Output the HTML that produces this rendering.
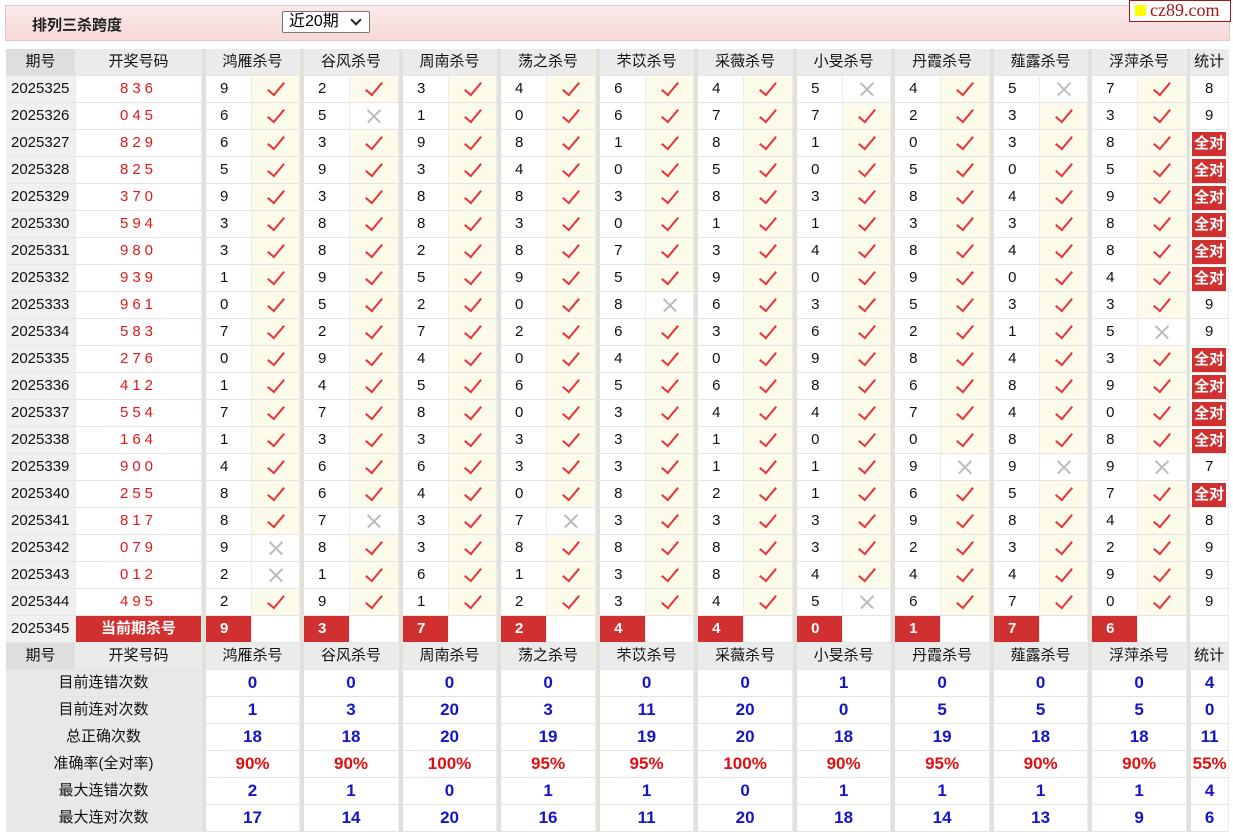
<!DOCTYPE html>
<html><head><meta charset="utf-8"><style>
body{margin:0;background:#fff;width:1233px;height:835px;overflow:hidden;font-family:"Liberation Sans","Noto Sans CJK SC",sans-serif;}
.top{position:absolute;left:5px;top:5px;width:1223px;height:34px;border:1px solid #e2c8c8;background:linear-gradient(#fbe9e9,#f6d9d9);}
.title{position:absolute;left:26px;top:8px;font-size:15px;font-weight:bold;color:#222;}
.sel{position:absolute;left:276px;top:5px;width:88px;height:22px;border:1px solid #777;background:#fff;font-size:16px;line-height:20px;padding-left:6px;box-sizing:border-box;border-radius:2px}
.sel span{position:absolute;right:9px;top:4px;width:6px;height:6px;border-right:2px solid #222;border-bottom:2px solid #222;transform:rotate(45deg)}
.logo{position:absolute;left:1129px;top:0;width:100px;height:20px;border:1px solid #a01818;background:#fff;font-family:"Liberation Serif",serif;font-size:18px;color:#a01818;line-height:19px;}
.logo i{display:inline-block;width:11px;height:11px;background:#ff0;margin:0 4px 0 5px;vertical-align:0}
table{position:absolute;left:6px;top:49px;border-collapse:separate;border-spacing:0;table-layout:fixed;width:1223px;}
tr{height:27px}
td{height:26px;line-height:26px;padding:0;border-bottom:1px solid #e4e4e4;border-right:1px solid #ececec;text-align:center;font-size:15px;color:#111;white-space:nowrap;overflow:hidden;position:relative}
.h td{background:#ebebeb;}
.h td.q{background:#dedede}
td.q{background:#f0f0f0;text-align:left;padding-left:5px}
.h td.q{text-align:center;padding:0}
td.k{color:#e01818;letter-spacing:4px;}
td.n{border-left:4px solid #e3e0d8;text-align:left;padding-left:14px}
.h td.n{text-align:center;padding:0}
td.y{background:#fdfbe9}
td.y::after{content:"";position:absolute;left:50%;top:50%;width:7px;height:15px;border-right:2px solid #e8323c;border-bottom:2px solid #e8323c;transform:translate(-50%,-62%) rotate(40deg)}
td.x{background:#fff}
td.x::before,td.x::after{content:"";position:absolute;left:50%;top:50%;width:18px;height:1.5px;background:#bbb;transform:translate(-50%,-50%) rotate(45deg)}
td.x::after{transform:translate(-50%,-50%) rotate(-45deg)}
td.s{border-left:3px solid #e3e0d8}
td.a{border-left:3px solid #e3e0d8;background:#fff;padding:0 2px}
td.a b{display:block;background:#d0302f;color:#fff;font-size:15px;line-height:24px;height:24px;margin-top:1px}
tr.cur td.k{background:#d0302f;color:#fff;font-weight:bold;letter-spacing:0}
tr.cur td.n{background:#d0302f;color:#fff;font-weight:bold}
td.L{background:#e8e8e8}
td.v{border-left:4px solid #e3e0d8;color:#1515c8;font-weight:bold;font-size:17px}
td.v.r{color:#e01010}
</style></head><body>
<div class="top"><div class="title">排列三杀跨度</div><div class="sel">近20期<span></span></div></div>
<div class="logo"><i></i>cz89.com</div>
<table>
<colgroup><col style="width:70px"><col style="width:126px"><col style="width:50px"><col style="width:48px"><col style="width:50px"><col style="width:49px"><col style="width:50px"><col style="width:48px"><col style="width:50px"><col style="width:49px"><col style="width:50px"><col style="width:48px"><col style="width:50px"><col style="width:49px"><col style="width:50px"><col style="width:48px"><col style="width:50px"><col style="width:49px"><col style="width:50px"><col style="width:48px"><col style="width:50px"><col style="width:49px"><col style="width:42px"></colgroup>
<tr class="h"><td class="q">期号</td><td>开奖号码</td><td class="n" colspan="2">鸿雁杀号</td><td class="n" colspan="2">谷风杀号</td><td class="n" colspan="2">周南杀号</td><td class="n" colspan="2">荡之杀号</td><td class="n" colspan="2">芣苡杀号</td><td class="n" colspan="2">采薇杀号</td><td class="n" colspan="2">小旻杀号</td><td class="n" colspan="2">丹霞杀号</td><td class="n" colspan="2">薤露杀号</td><td class="n" colspan="2">浮萍杀号</td><td class="s">统计</td></tr>
<tr><td class="q">2025325</td><td class="k">836</td><td class="n">9</td><td class="y"></td><td class="n">2</td><td class="y"></td><td class="n">3</td><td class="y"></td><td class="n">4</td><td class="y"></td><td class="n">6</td><td class="y"></td><td class="n">4</td><td class="y"></td><td class="n">5</td><td class="x"></td><td class="n">4</td><td class="y"></td><td class="n">5</td><td class="x"></td><td class="n">7</td><td class="y"></td><td class="s">8</td></tr>
<tr><td class="q">2025326</td><td class="k">045</td><td class="n">6</td><td class="y"></td><td class="n">5</td><td class="x"></td><td class="n">1</td><td class="y"></td><td class="n">0</td><td class="y"></td><td class="n">6</td><td class="y"></td><td class="n">7</td><td class="y"></td><td class="n">7</td><td class="y"></td><td class="n">2</td><td class="y"></td><td class="n">3</td><td class="y"></td><td class="n">3</td><td class="y"></td><td class="s">9</td></tr>
<tr><td class="q">2025327</td><td class="k">829</td><td class="n">6</td><td class="y"></td><td class="n">3</td><td class="y"></td><td class="n">9</td><td class="y"></td><td class="n">8</td><td class="y"></td><td class="n">1</td><td class="y"></td><td class="n">8</td><td class="y"></td><td class="n">1</td><td class="y"></td><td class="n">0</td><td class="y"></td><td class="n">3</td><td class="y"></td><td class="n">8</td><td class="y"></td><td class="a"><b>全对</b></td></tr>
<tr><td class="q">2025328</td><td class="k">825</td><td class="n">5</td><td class="y"></td><td class="n">9</td><td class="y"></td><td class="n">3</td><td class="y"></td><td class="n">4</td><td class="y"></td><td class="n">0</td><td class="y"></td><td class="n">5</td><td class="y"></td><td class="n">0</td><td class="y"></td><td class="n">5</td><td class="y"></td><td class="n">0</td><td class="y"></td><td class="n">5</td><td class="y"></td><td class="a"><b>全对</b></td></tr>
<tr><td class="q">2025329</td><td class="k">370</td><td class="n">9</td><td class="y"></td><td class="n">3</td><td class="y"></td><td class="n">8</td><td class="y"></td><td class="n">8</td><td class="y"></td><td class="n">3</td><td class="y"></td><td class="n">8</td><td class="y"></td><td class="n">3</td><td class="y"></td><td class="n">8</td><td class="y"></td><td class="n">4</td><td class="y"></td><td class="n">9</td><td class="y"></td><td class="a"><b>全对</b></td></tr>
<tr><td class="q">2025330</td><td class="k">594</td><td class="n">3</td><td class="y"></td><td class="n">8</td><td class="y"></td><td class="n">8</td><td class="y"></td><td class="n">3</td><td class="y"></td><td class="n">0</td><td class="y"></td><td class="n">1</td><td class="y"></td><td class="n">1</td><td class="y"></td><td class="n">3</td><td class="y"></td><td class="n">3</td><td class="y"></td><td class="n">8</td><td class="y"></td><td class="a"><b>全对</b></td></tr>
<tr><td class="q">2025331</td><td class="k">980</td><td class="n">3</td><td class="y"></td><td class="n">8</td><td class="y"></td><td class="n">2</td><td class="y"></td><td class="n">8</td><td class="y"></td><td class="n">7</td><td class="y"></td><td class="n">3</td><td class="y"></td><td class="n">4</td><td class="y"></td><td class="n">8</td><td class="y"></td><td class="n">4</td><td class="y"></td><td class="n">8</td><td class="y"></td><td class="a"><b>全对</b></td></tr>
<tr><td class="q">2025332</td><td class="k">939</td><td class="n">1</td><td class="y"></td><td class="n">9</td><td class="y"></td><td class="n">5</td><td class="y"></td><td class="n">9</td><td class="y"></td><td class="n">5</td><td class="y"></td><td class="n">9</td><td class="y"></td><td class="n">0</td><td class="y"></td><td class="n">9</td><td class="y"></td><td class="n">0</td><td class="y"></td><td class="n">4</td><td class="y"></td><td class="a"><b>全对</b></td></tr>
<tr><td class="q">2025333</td><td class="k">961</td><td class="n">0</td><td class="y"></td><td class="n">5</td><td class="y"></td><td class="n">2</td><td class="y"></td><td class="n">0</td><td class="y"></td><td class="n">8</td><td class="x"></td><td class="n">6</td><td class="y"></td><td class="n">3</td><td class="y"></td><td class="n">5</td><td class="y"></td><td class="n">3</td><td class="y"></td><td class="n">3</td><td class="y"></td><td class="s">9</td></tr>
<tr><td class="q">2025334</td><td class="k">583</td><td class="n">7</td><td class="y"></td><td class="n">2</td><td class="y"></td><td class="n">7</td><td class="y"></td><td class="n">2</td><td class="y"></td><td class="n">6</td><td class="y"></td><td class="n">3</td><td class="y"></td><td class="n">6</td><td class="y"></td><td class="n">2</td><td class="y"></td><td class="n">1</td><td class="y"></td><td class="n">5</td><td class="x"></td><td class="s">9</td></tr>
<tr><td class="q">2025335</td><td class="k">276</td><td class="n">0</td><td class="y"></td><td class="n">9</td><td class="y"></td><td class="n">4</td><td class="y"></td><td class="n">0</td><td class="y"></td><td class="n">4</td><td class="y"></td><td class="n">0</td><td class="y"></td><td class="n">9</td><td class="y"></td><td class="n">8</td><td class="y"></td><td class="n">4</td><td class="y"></td><td class="n">3</td><td class="y"></td><td class="a"><b>全对</b></td></tr>
<tr><td class="q">2025336</td><td class="k">412</td><td class="n">1</td><td class="y"></td><td class="n">4</td><td class="y"></td><td class="n">5</td><td class="y"></td><td class="n">6</td><td class="y"></td><td class="n">5</td><td class="y"></td><td class="n">6</td><td class="y"></td><td class="n">8</td><td class="y"></td><td class="n">6</td><td class="y"></td><td class="n">8</td><td class="y"></td><td class="n">9</td><td class="y"></td><td class="a"><b>全对</b></td></tr>
<tr><td class="q">2025337</td><td class="k">554</td><td class="n">7</td><td class="y"></td><td class="n">7</td><td class="y"></td><td class="n">8</td><td class="y"></td><td class="n">0</td><td class="y"></td><td class="n">3</td><td class="y"></td><td class="n">4</td><td class="y"></td><td class="n">4</td><td class="y"></td><td class="n">7</td><td class="y"></td><td class="n">4</td><td class="y"></td><td class="n">0</td><td class="y"></td><td class="a"><b>全对</b></td></tr>
<tr><td class="q">2025338</td><td class="k">164</td><td class="n">1</td><td class="y"></td><td class="n">3</td><td class="y"></td><td class="n">3</td><td class="y"></td><td class="n">3</td><td class="y"></td><td class="n">3</td><td class="y"></td><td class="n">1</td><td class="y"></td><td class="n">0</td><td class="y"></td><td class="n">0</td><td class="y"></td><td class="n">8</td><td class="y"></td><td class="n">8</td><td class="y"></td><td class="a"><b>全对</b></td></tr>
<tr><td class="q">2025339</td><td class="k">900</td><td class="n">4</td><td class="y"></td><td class="n">6</td><td class="y"></td><td class="n">6</td><td class="y"></td><td class="n">3</td><td class="y"></td><td class="n">3</td><td class="y"></td><td class="n">1</td><td class="y"></td><td class="n">1</td><td class="y"></td><td class="n">9</td><td class="x"></td><td class="n">9</td><td class="x"></td><td class="n">9</td><td class="x"></td><td class="s">7</td></tr>
<tr><td class="q">2025340</td><td class="k">255</td><td class="n">8</td><td class="y"></td><td class="n">6</td><td class="y"></td><td class="n">4</td><td class="y"></td><td class="n">0</td><td class="y"></td><td class="n">8</td><td class="y"></td><td class="n">2</td><td class="y"></td><td class="n">1</td><td class="y"></td><td class="n">6</td><td class="y"></td><td class="n">5</td><td class="y"></td><td class="n">7</td><td class="y"></td><td class="a"><b>全对</b></td></tr>
<tr><td class="q">2025341</td><td class="k">817</td><td class="n">8</td><td class="y"></td><td class="n">7</td><td class="x"></td><td class="n">3</td><td class="y"></td><td class="n">7</td><td class="x"></td><td class="n">3</td><td class="y"></td><td class="n">3</td><td class="y"></td><td class="n">3</td><td class="y"></td><td class="n">9</td><td class="y"></td><td class="n">8</td><td class="y"></td><td class="n">4</td><td class="y"></td><td class="s">8</td></tr>
<tr><td class="q">2025342</td><td class="k">079</td><td class="n">9</td><td class="x"></td><td class="n">8</td><td class="y"></td><td class="n">3</td><td class="y"></td><td class="n">8</td><td class="y"></td><td class="n">8</td><td class="y"></td><td class="n">8</td><td class="y"></td><td class="n">3</td><td class="y"></td><td class="n">2</td><td class="y"></td><td class="n">3</td><td class="y"></td><td class="n">2</td><td class="y"></td><td class="s">9</td></tr>
<tr><td class="q">2025343</td><td class="k">012</td><td class="n">2</td><td class="x"></td><td class="n">1</td><td class="y"></td><td class="n">6</td><td class="y"></td><td class="n">1</td><td class="y"></td><td class="n">3</td><td class="y"></td><td class="n">8</td><td class="y"></td><td class="n">4</td><td class="y"></td><td class="n">4</td><td class="y"></td><td class="n">4</td><td class="y"></td><td class="n">9</td><td class="y"></td><td class="s">9</td></tr>
<tr><td class="q">2025344</td><td class="k">495</td><td class="n">2</td><td class="y"></td><td class="n">9</td><td class="y"></td><td class="n">1</td><td class="y"></td><td class="n">2</td><td class="y"></td><td class="n">3</td><td class="y"></td><td class="n">4</td><td class="y"></td><td class="n">5</td><td class="x"></td><td class="n">6</td><td class="y"></td><td class="n">7</td><td class="y"></td><td class="n">0</td><td class="y"></td><td class="s">9</td></tr>
<tr class="cur"><td class="q">2025345</td><td class="k">当前期杀号</td><td class="n">9</td><td></td><td class="n">3</td><td></td><td class="n">7</td><td></td><td class="n">2</td><td></td><td class="n">4</td><td></td><td class="n">4</td><td></td><td class="n">0</td><td></td><td class="n">1</td><td></td><td class="n">7</td><td></td><td class="n">6</td><td></td><td class="s"></td></tr>
<tr class="h"><td class="q">期号</td><td>开奖号码</td><td class="n" colspan="2">鸿雁杀号</td><td class="n" colspan="2">谷风杀号</td><td class="n" colspan="2">周南杀号</td><td class="n" colspan="2">荡之杀号</td><td class="n" colspan="2">芣苡杀号</td><td class="n" colspan="2">采薇杀号</td><td class="n" colspan="2">小旻杀号</td><td class="n" colspan="2">丹霞杀号</td><td class="n" colspan="2">薤露杀号</td><td class="n" colspan="2">浮萍杀号</td><td class="s">统计</td></tr>
<tr><td class="L" colspan="2">目前连错次数</td><td class="v" colspan="2">0</td><td class="v" colspan="2">0</td><td class="v" colspan="2">0</td><td class="v" colspan="2">0</td><td class="v" colspan="2">0</td><td class="v" colspan="2">0</td><td class="v" colspan="2">1</td><td class="v" colspan="2">0</td><td class="v" colspan="2">0</td><td class="v" colspan="2">0</td><td class="v">4</td></tr>
<tr><td class="L" colspan="2">目前连对次数</td><td class="v" colspan="2">1</td><td class="v" colspan="2">3</td><td class="v" colspan="2">20</td><td class="v" colspan="2">3</td><td class="v" colspan="2">11</td><td class="v" colspan="2">20</td><td class="v" colspan="2">0</td><td class="v" colspan="2">5</td><td class="v" colspan="2">5</td><td class="v" colspan="2">5</td><td class="v">0</td></tr>
<tr><td class="L" colspan="2">总正确次数</td><td class="v" colspan="2">18</td><td class="v" colspan="2">18</td><td class="v" colspan="2">20</td><td class="v" colspan="2">19</td><td class="v" colspan="2">19</td><td class="v" colspan="2">20</td><td class="v" colspan="2">18</td><td class="v" colspan="2">19</td><td class="v" colspan="2">18</td><td class="v" colspan="2">18</td><td class="v">11</td></tr>
<tr><td class="L" colspan="2">准确率(全对率)</td><td class="v r" colspan="2">90%</td><td class="v r" colspan="2">90%</td><td class="v r" colspan="2">100%</td><td class="v r" colspan="2">95%</td><td class="v r" colspan="2">95%</td><td class="v r" colspan="2">100%</td><td class="v r" colspan="2">90%</td><td class="v r" colspan="2">95%</td><td class="v r" colspan="2">90%</td><td class="v r" colspan="2">90%</td><td class="v r">55%</td></tr>
<tr><td class="L" colspan="2">最大连错次数</td><td class="v" colspan="2">2</td><td class="v" colspan="2">1</td><td class="v" colspan="2">0</td><td class="v" colspan="2">1</td><td class="v" colspan="2">1</td><td class="v" colspan="2">0</td><td class="v" colspan="2">1</td><td class="v" colspan="2">1</td><td class="v" colspan="2">1</td><td class="v" colspan="2">1</td><td class="v">4</td></tr>
<tr><td class="L" colspan="2">最大连对次数</td><td class="v" colspan="2">17</td><td class="v" colspan="2">14</td><td class="v" colspan="2">20</td><td class="v" colspan="2">16</td><td class="v" colspan="2">11</td><td class="v" colspan="2">20</td><td class="v" colspan="2">18</td><td class="v" colspan="2">14</td><td class="v" colspan="2">13</td><td class="v" colspan="2">9</td><td class="v">6</td></tr>
</table>
</body></html>
